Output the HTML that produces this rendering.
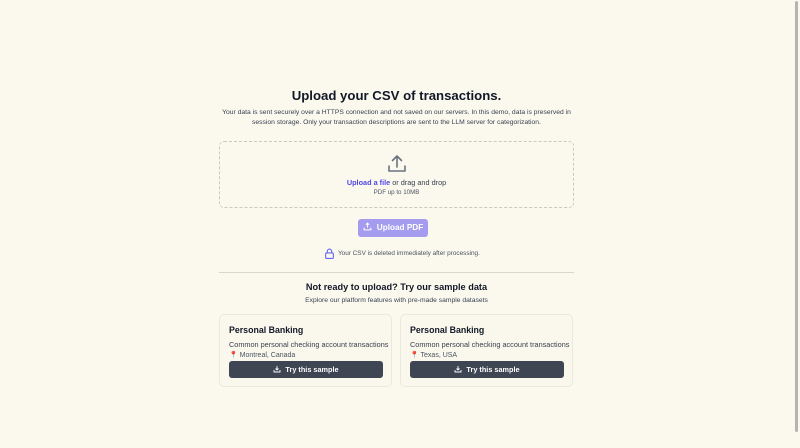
<!DOCTYPE html>
<html><head><style>
html,body{margin:0;padding:0;width:800px;height:448px;overflow:hidden;background:#fbf9ee;font-family:"Liberation Sans",sans-serif;color:#111827;}
.sb{position:absolute;left:795px;top:1px;width:3px;height:431px;background:#b4b4b4;border-radius:2px}
.abs{position:absolute}
h1{position:absolute;left:0;width:793px;top:88px;margin:0;text-align:center;font-size:13.2px;font-weight:bold}
.sub{position:absolute;left:200px;width:393px;text-align:center;font-size:6.75px;line-height:10px;color:#374151;white-space:nowrap}
.drop{position:absolute;left:219px;top:141px;width:353px;height:65px;border:1px dashed #c9c9c0;border-radius:5px}
.btn{position:absolute;left:358px;top:219px;width:70px;height:18px;background:#a59bef;border-radius:3px;color:#fff;font-size:8.2px;font-weight:bold;text-align:center;line-height:18px}
.card{position:absolute;top:314px;width:171px;height:71px;border:1px solid #ebe9dd;border-radius:5px;background:#faf8ec}
.card .t{position:absolute;left:9px;top:10px;font-size:8.8px;font-weight:bold}
.card .d{position:absolute;left:9px;top:25px;font-size:7.3px;color:#374151;white-space:nowrap}
.card .l{position:absolute;left:9px;top:36px;font-size:7px;color:#4b5563}
.card .b{position:absolute;left:9px;top:46px;width:154px;height:17px;background:#3e4553;border-radius:3px;color:#fff;font-size:7.3px;font-weight:bold;text-align:center;line-height:17px}
</style></head><body>
<div class="sb"></div>
<h1>Upload your CSV of transactions.</h1>
<div class="sub" style="top:108px">Your data is sent securely over a HTTPS connection and not saved on our servers. In this demo, data is preserved in</div>
<div class="sub" style="top:118px">session storage. Only your transaction descriptions are sent to the LLM server for categorization.</div>
<div class="drop">
<svg class="abs" style="left:167px;top:12px" width="20" height="20" viewBox="0 0 20 20" fill="none" stroke="#6b7280" stroke-width="1.6" stroke-linecap="round" stroke-linejoin="round"><path d="M10 13V2M5.5 6.5L10 2l4.5 4.5M2 12v5h16v-5"/></svg>
<div class="abs" style="left:0;width:353px;top:36px;text-align:center;font-size:7.3px;color:#374151"><span style="color:#4f46e5;font-weight:bold">Upload a file</span> or drag and drop</div>
<div class="abs" style="left:0;width:353px;top:47px;text-align:center;font-size:6.2px;color:#4b5563">PDF up to 10MB</div>
</div>
<div class="btn"><svg style="vertical-align:-1px;margin-right:5px" width="9" height="9" viewBox="0 0 8 8" fill="none" stroke="#fff" stroke-width="0.9"><path d="M4 5V1M2.5 2.5L4 1l1.5 1.5M1 5v2h6V5"/></svg>Upload PDF</div>
<svg class="abs" style="left:324px;top:248px" width="11" height="11" viewBox="0 0 10 10" fill="none" stroke="#6366f1" stroke-width="1"><rect x="1.5" y="4.5" width="7" height="5" rx="1"/><path d="M3 4.5V3a2 2 0 014 0v1.5"/></svg>
<div class="abs" style="left:338px;top:250px;font-size:6.4px;color:#4b5563">Your CSV is deleted immediately after processing.</div>
<div class="abs" style="left:219px;top:272px;width:355px;height:1px;background:#d9d7cc"></div>
<div class="abs" style="left:0;width:793px;top:282px;text-align:center;font-size:9.2px;font-weight:bold">Not ready to upload? Try our sample data</div>
<div class="abs" style="left:0;width:793px;top:297px;text-align:center;font-size:6.75px;color:#374151">Explore our platform features with pre-made sample datasets</div>
<div class="card" style="left:219px"><div class="t">Personal Banking</div><div class="d">Common personal checking account transactions</div><div class="l"><span style="color:#dc2626">📍</span> Montreal, Canada</div><div class="b"><svg style="vertical-align:-1px;margin-right:4px" width="8" height="8" viewBox="0 0 8 8" fill="none" stroke="#fff" stroke-width="0.9"><path d="M4 1v4M2.5 3.5L4 5l1.5-1.5M1 5v2h6V5"/></svg>Try this sample</div></div>
<div class="card" style="left:400px"><div class="t">Personal Banking</div><div class="d">Common personal checking account transactions</div><div class="l"><span style="color:#dc2626">📍</span> Texas, USA</div><div class="b"><svg style="vertical-align:-1px;margin-right:4px" width="8" height="8" viewBox="0 0 8 8" fill="none" stroke="#fff" stroke-width="0.9"><path d="M4 1v4M2.5 3.5L4 5l1.5-1.5M1 5v2h6V5"/></svg>Try this sample</div></div>
</body></html>
